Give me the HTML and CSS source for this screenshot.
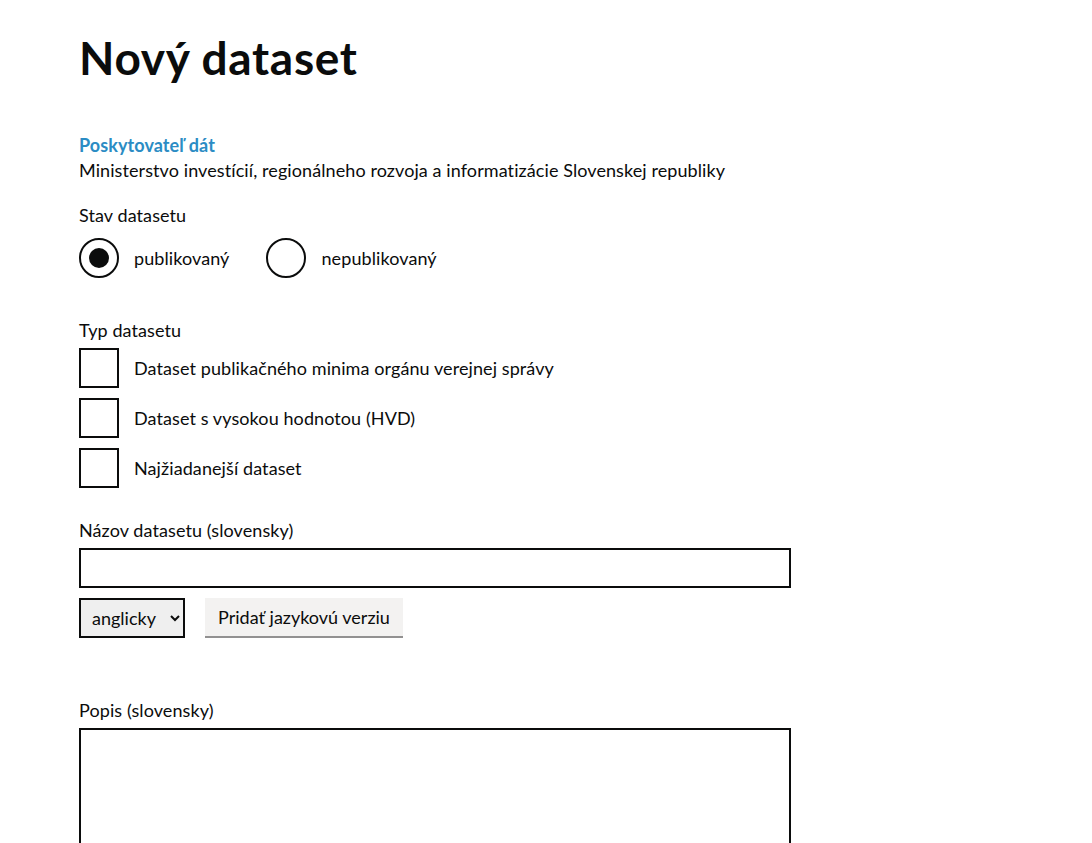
FILE: index.html
```html
<!DOCTYPE html>
<html lang="sk">
<head>
<meta charset="utf-8">
<title>Nový dataset</title>
<link rel="stylesheet" href="styles.css">
</head>
<body>
<main class="page">
  <h1 class="title">Nový dataset</h1>

  <section class="provider">
    <div class="provider-label">Poskytovateľ dát</div>
    <div class="provider-name">Ministerstvo investícií, regionálneho rozvoja a informatizácie Slovenskej republiky</div>
  </section>

  <fieldset class="group group-status">
    <legend class="label">Stav datasetu</legend>
    <div class="radios">
      <label class="radio">
        <span class="radio-mark checked"></span>
        <span class="radio-text">publikovaný</span>
      </label>
      <label class="radio">
        <span class="radio-mark"></span>
        <span class="radio-text">nepublikovaný</span>
      </label>
    </div>
  </fieldset>

  <fieldset class="group group-type">
    <legend class="label">Typ datasetu</legend>
    <div class="checks">
      <label class="check"><span class="check-mark"></span><span class="check-text">Dataset publikačného minima orgánu verejnej správy</span></label>
      <label class="check"><span class="check-mark"></span><span class="check-text">Dataset s vysokou hodnotou (HVD)</span></label>
      <label class="check"><span class="check-mark"></span><span class="check-text">Najžiadanejší dataset</span></label>
    </div>
  </fieldset>

  <div class="field field-name">
    <label class="label label-tight" for="name">Názov datasetu (slovensky)</label>
    <input class="input" id="name" type="text">
    <div class="lang-row">
      <select class="select">
        <option>anglicky</option>
      </select>
      <button class="button" type="button">Pridať jazykovú verziu</button>
    </div>
  </div>

  <div class="field field-desc">
    <label class="label label-desc" for="desc">Popis (slovensky)</label>
    <textarea class="textarea" id="desc"></textarea>
  </div>
</main>
</body>
</html>
```
FILE: styles.css
```css
* { box-sizing: border-box; }
html, body { margin: 0; padding: 0; background: #fff; }
body {
  font-family: "Lato", "Noto Sans", sans-serif;
  font-size: 18px;
  line-height: 25px;
  letter-spacing: 0.09px;
  color: #0b0c0c;
}
.page { padding: 30px 79px 0; }

.title {
  margin: 0;
  font-size: 46px;
  line-height: 56px;
  font-weight: 700;
  letter-spacing: 0.7px;
}

.provider { margin-top: 47px; }
.provider-label { color: #2b8cc4; font-weight: 700; }

.group { border: 0; margin: 0; padding: 0; min-width: 0; }
.label { display: block; padding: 0; margin: 0; }
.group-status { margin-top: 20px; }
.group-status .label { margin-bottom: 10px; }
.radios { display: flex; }
.radio { display: flex; align-items: center; margin-right: 37px; }
.radio-mark {
  width: 40px; height: 40px;
  border: 2px solid #0b0c0c;
  border-radius: 50%;
  display: flex; align-items: center; justify-content: center;
  margin-right: 15px;
}
.radio-mark.checked::after {
  content: "";
  width: 20px; height: 20px;
  border-radius: 50%;
  background: #0b0c0c;
}

.group-type { margin-top: 40px; }
.group-type .label { margin-bottom: 5px; }
.checks { display: flex; flex-direction: column; gap: 10px; }
.check { display: flex; align-items: center; }
.check-mark {
  width: 40px; height: 40px;
  border: 2px solid #0b0c0c;
  margin-right: 15px;
  flex: none;
}

.field-name { margin-top: 30px; }
.label-tight { margin-bottom: 5px; }
.input {
  display: block;
  width: 712px; height: 40px;
  border: 2px solid #0b0c0c;
  border-radius: 0;
  font: inherit;
  padding: 5px;
}
.lang-row { display: flex; align-items: flex-start; margin-top: 10px; gap: 20px; }
.select {
  width: 106px; height: 40px;
  border: 2px solid #0b0c0c;
  border-radius: 0;
  background: #efefef;
  font: inherit;
  color: #0b0c0c;
  padding: 0 4px 0 7px;
}
.button {
  height: 38px;
  width: 198px;
  border: 0;
  border-radius: 0;
  background: #f3f2f1;
  box-shadow: 0 2px 0 #929191;
  font: inherit;
  color: #0b0c0c;
  padding: 0 12px;
}

.field-desc { margin-top: 60px; }
.label-desc { margin-bottom: 5px; }
.textarea {
  display: block;
  width: 712px; height: 200px;
  border: 2px solid #0b0c0c;
  border-radius: 0;
  font: inherit;
  resize: none;
}
```
